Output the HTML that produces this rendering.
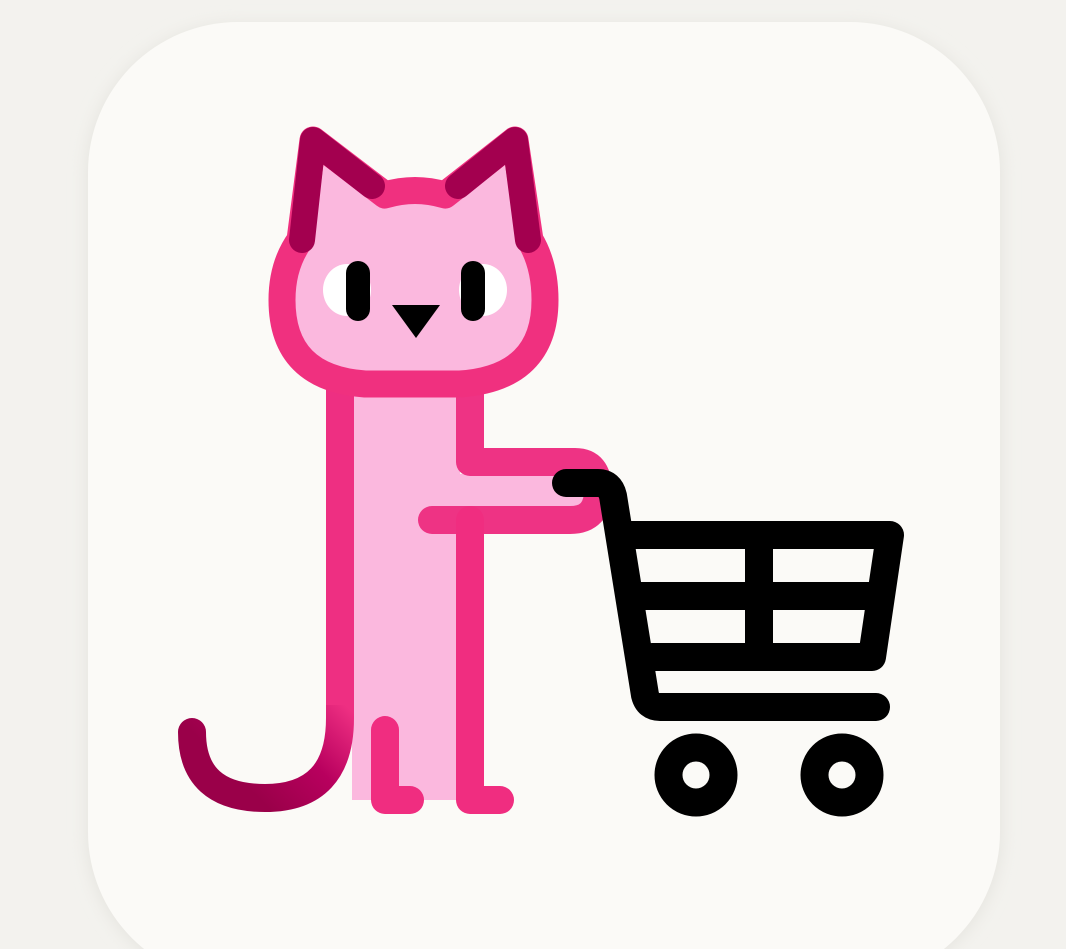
<!DOCTYPE html>
<html><head><style>
html,body{margin:0;padding:0;width:1066px;height:949px;overflow:hidden;background:#f3f2ee;}
</style></head><body>
<svg width="1066" height="949" viewBox="0 0 1066 949" xmlns="http://www.w3.org/2000/svg">
<defs>
<filter id="sh" x="-10%" y="-10%" width="120%" height="120%"><feGaussianBlur stdDeviation="8"/></filter>
<linearGradient id="tail" gradientUnits="userSpaceOnUse" x1="340" y1="700" x2="250" y2="790"><stop offset="0" stop-color="#ee2f82"/><stop offset="0.5" stop-color="#b8005e"/><stop offset="1" stop-color="#9a0049"/></linearGradient>
</defs>
<rect x="86" y="24" width="916" height="960" rx="150" fill="#e6e5e0" filter="url(#sh)"/>
<rect x="88" y="22" width="912" height="960" rx="150" fill="#fbfaf7"/>

<rect x="352" y="380" width="108" height="420" fill="#fbb8de"/>
<rect x="455" y="474" width="130" height="34" fill="#fbb8de"/>
<path d="M300,240 L313,140 L385,195 Q415,186 445,195 L515,140 L530,240 Q545,265 545,300 Q545,378 460,384 L365,384 Q282,378 282,300 Q282,265 300,240 Z" fill="#fbb8de"/>

<path d="M340,690 L340,718 Q340,798 265,798 Q192,798 192,732" fill="none" stroke="url(#tail)" stroke-width="28" stroke-linecap="round"/>
<path d="M340,385 L340,705" fill="none" stroke="#ee2f82" stroke-width="28"/>
<path d="M470,385 L470,462 L575,462 Q598,462 598,490 Q598,520 570,520 L432,520" fill="none" stroke="#ee3384" stroke-width="28" stroke-linecap="round" stroke-linejoin="round"/>
<path d="M470,520 L470,800 L500,800" fill="none" stroke="#f02d80" stroke-width="28" stroke-linecap="round" stroke-linejoin="round"/>
<path d="M385,730 L385,800 L410,800" fill="none" stroke="#f02d80" stroke-width="28" stroke-linecap="round" stroke-linejoin="round"/>

<path d="M300,240 L313,140 L385,195 Q415,186 445,195 L515,140 L530,240 Q545,265 545,300 Q545,378 460,384 L365,384 Q282,378 282,300 Q282,265 300,240 Z" fill="none" stroke="#f0307f" stroke-width="27" stroke-linejoin="round"/>
<path d="M302,240 L313,140 L372,186" fill="none" stroke="#a3004f" stroke-width="26" stroke-linecap="round" stroke-linejoin="round"/>
<path d="M528,240 L515,140 L458,186" fill="none" stroke="#a3004f" stroke-width="26" stroke-linecap="round" stroke-linejoin="round"/>
<path d="M323,210 L330,170 L375,212 Z" fill="#fbb8de"/>
<path d="M507,210 L500,170 L455,212 Z" fill="#fbb8de"/>

<ellipse cx="347" cy="290" rx="24" ry="26" fill="#fff"/>
<ellipse cx="483" cy="290" rx="24" ry="26" fill="#fff"/>
<rect x="346" y="261" width="24" height="60" rx="12" fill="#000"/>
<rect x="461" y="261" width="24" height="60" rx="12" fill="#000"/>
<path d="M392,305 L440,305 L416,338 Z" fill="#000"/>

<g fill="none" stroke="#000" stroke-width="28" stroke-linecap="round" stroke-linejoin="round">
<path d="M566,483 L598,483 Q610,483 613,496 L645,695 Q648,707 660,707 L876,707"/>
<path d="M630,535 L890,535 L872,657 L652,657"/>
<path d="M640,596 L880,596"/>
<path d="M759,535 L759,657" stroke-linecap="butt"/>
<circle cx="696" cy="775" r="27.5"/>
<circle cx="842" cy="775" r="27.5"/>
</g>
</svg>
</body></html>
